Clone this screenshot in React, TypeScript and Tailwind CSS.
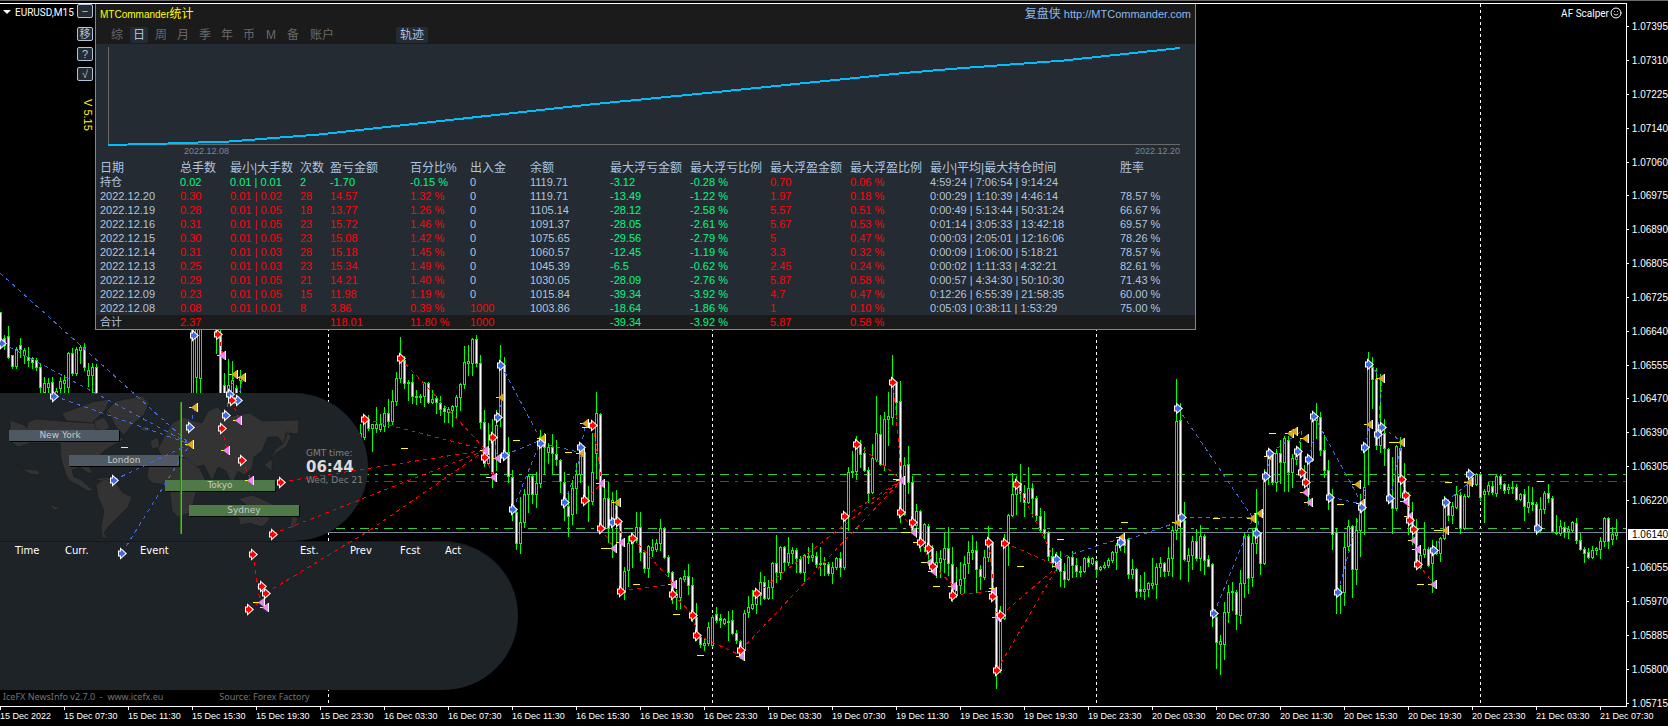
import { Smile } from "lucide-react";

// Bars are [high, bodyTop, bodyBottom, low, bear?], one every 4px from `x`
type Bar = number[];

const BAR_RUNS: { x: number; bars: Bar[] }[] = [
  {
    x: 0,
    bars: [
      [312, 312, 343, 344, 1], [335, 338, 345, 349, 1], [326, 336, 357, 358, 1], [355, 355, 366, 368, 1],
      [347, 349, 366, 368], [338, 345, 349, 357, 1], [348, 350, 355, 363], [347, 357, 360, 366, 1],
      [357, 358, 362, 368, 1], [358, 360, 367, 370, 1], [363, 367, 387, 393, 1], [377, 383, 392, 393],
      [378, 383, 387, 393], [377, 382, 393, 394, 1], [388, 391, 393, 394], [377, 381, 388, 393],
      [375, 380, 383, 392], [352, 353, 387, 393], [348, 353, 373, 375, 1], [347, 349, 373, 375],
      [345, 347, 350, 363], [343, 347, 367, 370, 1], [363, 370, 375, 386], [363, 367, 375, 393],
      [364, 367, 393, 394, 1],
    ],
  },
  { x: 192, bars: [[328, 329, 394, 396], [328, 329, 377, 394], [328, 329, 378, 393]] },
  {
    x: 216,
    bars: [
      [328, 329, 331, 353], [328, 336, 393, 394, 1], [373, 385, 394, 395, 1], [359, 385, 394, 395],
      [361, 380, 394, 395], [385, 388, 394, 395, 1], [370, 376, 380, 393],
    ],
  },
  {
    x: 360,
    bars: [
      [424, 433, 437, 437], [415, 420, 437, 439], [415, 420, 428, 430, 1], [424, 424, 428, 451],
      [407, 424, 428, 432], [414, 424, 429, 431], [407, 413, 426, 431], [399, 413, 421, 427, 1],
      [390, 401, 421, 424], [372, 378, 401, 405], [337, 360, 378, 382], [356, 360, 383, 388, 1],
      [380, 382, 383, 400], [374, 382, 396, 403, 1], [390, 396, 397, 404], [394, 396, 397, 402],
      [382, 383, 396, 406], [382, 383, 402, 403, 1], [390, 399, 402, 403], [396, 398, 402, 413, 1],
      [396, 403, 409, 415, 1], [405, 408, 411, 422, 1], [407, 409, 412, 422], [405, 406, 410, 426],
      [395, 397, 406, 418], [383, 384, 397, 410], [346, 362, 384, 388], [345, 361, 363, 375],
      [338, 339, 363, 375], [335, 339, 363, 366, 1], [355, 363, 422, 428, 1], [410, 422, 463, 466, 1],
      [423, 448, 463, 465], [419, 440, 473, 487, 1], [410, 425, 458, 470], [345, 367, 417, 426],
      [357, 366, 455, 457, 1], [437, 452, 476, 482, 1], [470, 477, 508, 520, 1], [510, 512, 543, 549, 1],
      [497, 522, 543, 553], [489, 494, 522, 527], [474, 476, 494, 512], [474, 476, 494, 503, 1],
      [472, 483, 494, 507], [430, 443, 483, 487], [433, 443, 447, 473, 1], [443, 447, 452, 463],
      [434, 447, 453, 473, 1], [440, 454, 459, 465, 1], [459, 460, 481, 492, 1], [472, 482, 502, 520, 1],
      [493, 506, 516, 536, 1], [480, 488, 514, 524], [463, 474, 488, 513], [452, 453, 474, 482],
      [448, 452, 500, 502, 1], [486, 500, 501, 521], [433, 472, 501, 504], [392, 413, 453, 478],
      [413, 414, 527, 533, 1], [479, 498, 527, 529], [482, 498, 528, 542, 1], [492, 500, 523, 557],
      [490, 505, 521, 547, 1], [521, 522, 592, 595, 1], [567, 571, 592, 599], [536, 543, 570, 586],
      [532, 535, 543, 567], [512, 527, 540, 542], [512, 527, 552, 560, 1], [550, 552, 568, 572, 1],
      [545, 546, 568, 577], [539, 547, 550, 556], [539, 543, 549, 551], [519, 528, 543, 550],
      [527, 528, 557, 558, 1], [555, 557, 572, 576, 1], [571, 572, 593, 603, 1], [590, 594, 597, 609],
      [577, 578, 597, 608], [570, 576, 579, 581], [564, 576, 585, 594, 1], [577, 585, 613, 621, 1],
      [603, 617, 638, 640, 1], [635, 637, 644, 647, 1], [638, 643, 645, 650], [622, 627, 643, 645],
      [615, 617, 645, 646], [607, 614, 620, 622, 1], [614, 618, 620, 627, 1], [618, 619, 623, 624],
      [611, 621, 622, 640], [610, 620, 633, 634, 1], [630, 633, 640, 643, 1], [640, 641, 650, 658, 1],
      [610, 613, 650, 660], [596, 607, 612, 617], [590, 604, 608, 609], [590, 595, 604, 613],
      [572, 582, 595, 604], [576, 582, 598, 599, 1], [580, 587, 598, 599], [562, 563, 587, 598],
      [535, 563, 572, 582, 1], [546, 547, 572, 579], [546, 547, 562, 570, 1], [537, 553, 562, 565],
      [547, 550, 553, 563], [548, 550, 558, 572, 1], [556, 559, 572, 573, 1], [554, 555, 572, 581],
      [547, 556, 557, 563], [543, 555, 557, 561], [552, 556, 564, 567, 1], [547, 563, 564, 575],
      [557, 563, 564, 575], [562, 564, 573, 575, 1], [562, 567, 573, 583], [557, 558, 567, 569],
      [552, 558, 567, 576, 1], [518, 520, 567, 569], [467, 472, 515, 530], [451, 471, 472, 477],
      [436, 447, 471, 479], [440, 445, 454, 467, 1], [447, 453, 470, 471, 1], [467, 470, 493, 502, 1],
      [444, 458, 492, 493], [396, 433, 459, 461], [415, 434, 464, 465, 1], [412, 419, 465, 470],
      [392, 416, 419, 445], [355, 385, 417, 424], [382, 383, 402, 418, 1], [381, 401, 515, 522, 1],
      [457, 465, 514, 515], [446, 464, 482, 493, 1], [476, 482, 530, 532, 1], [504, 511, 525, 537],
      [510, 511, 542, 551, 1], [523, 524, 547, 551], [524, 526, 545, 565, 1], [545, 548, 568, 569, 1],
      [551, 562, 567, 577], [550, 558, 562, 577], [532, 548, 559, 572], [527, 548, 563, 575, 1],
      [547, 564, 597, 601, 1], [567, 585, 595, 597], [562, 579, 585, 593], [556, 564, 578, 592],
      [541, 552, 563, 573], [535, 550, 552, 559], [541, 550, 569, 592, 1], [565, 569, 576, 589, 1],
      [550, 557, 577, 579], [526, 543, 557, 561], [542, 543, 595, 597, 1], [596, 597, 670, 688, 1],
      [606, 613, 670, 672], [534, 543, 618, 619], [514, 515, 543, 565], [473, 494, 515, 516],
      [476, 487, 494, 514], [464, 483, 493, 501, 1], [485, 493, 502, 516, 1], [467, 488, 502, 503],
      [483, 488, 498, 516, 1], [496, 498, 515, 520, 1], [508, 516, 530, 532, 1], [511, 529, 533, 538, 1],
      [531, 532, 556, 560, 1], [548, 556, 563, 567, 1], [552, 560, 565, 570], [551, 560, 571, 586, 1],
      [563, 571, 579, 587, 1], [556, 557, 579, 580], [551, 557, 565, 577, 1], [558, 565, 571, 576, 1],
      [566, 571, 572, 576], [557, 558, 571, 572], [556, 558, 562, 566, 1], [557, 558, 563, 564],
      [560, 561, 569, 577, 1], [566, 567, 569, 570], [562, 565, 567, 568], [558, 560, 565, 567],
      [551, 552, 560, 562], [543, 545, 552, 569], [537, 540, 545, 550], [538, 539, 545, 552, 1],
      [538, 539, 574, 578, 1], [559, 569, 574, 578], [568, 569, 591, 597, 1], [575, 589, 591, 596, 1],
      [572, 589, 591, 599], [582, 583, 589, 596], [558, 583, 585, 588], [563, 567, 584, 598],
      [557, 563, 567, 576], [562, 563, 571, 576, 1], [547, 558, 571, 575], [526, 530, 558, 576],
      [379, 421, 530, 539], [403, 420, 518, 579, 1], [502, 520, 559, 560, 1], [548, 555, 561, 581],
      [536, 541, 555, 569], [529, 541, 558, 560, 1], [525, 536, 558, 570], [534, 536, 560, 574, 1],
      [555, 559, 566, 566, 1], [563, 564, 615, 626, 1], [612, 617, 642, 668, 1], [635, 641, 644, 674],
      [602, 612, 644, 659], [585, 592, 612, 622], [582, 591, 592, 610], [590, 592, 614, 629, 1],
      [570, 583, 615, 623], [533, 536, 583, 597], [534, 536, 578, 593, 1], [529, 543, 577, 586],
      [489, 528, 543, 553], [532, 533, 563, 574, 1], [469, 477, 563, 564], [452, 454, 477, 484],
      [451, 453, 482, 484, 1], [449, 453, 482, 491], [440, 453, 462, 483, 1], [436, 438, 462, 491],
      [436, 440, 472, 491, 1], [454, 458, 472, 487], [448, 453, 459, 464], [442, 450, 470, 472, 1],
      [465, 472, 480, 483, 1], [455, 460, 494, 505], [418, 420, 460, 461], [403, 416, 420, 438],
      [412, 417, 450, 455, 1], [435, 450, 470, 477, 1], [460, 470, 497, 509, 1], [489, 497, 534, 549, 1],
      [528, 532, 592, 613, 1], [585, 592, 594, 613], [533, 547, 592, 605], [520, 526, 546, 550],
      [525, 526, 569, 597, 1], [518, 530, 569, 584], [494, 509, 530, 556], [446, 487, 509, 534],
      [352, 368, 447, 484], [357, 367, 379, 408, 1], [368, 379, 445, 449, 1], [374, 427, 445, 452],
      [419, 433, 448, 465, 1], [448, 449, 497, 502, 1], [457, 500, 508, 533, 1], [445, 446, 508, 510],
      [437, 448, 478, 497, 1], [463, 478, 493, 500, 1], [492, 497, 518, 534, 1], [502, 518, 532, 544, 1],
      [519, 530, 563, 567, 1], [553, 555, 567, 568], [522, 549, 554, 557], [547, 549, 565, 566, 1],
      [540, 553, 563, 592], [541, 549, 553, 554], [537, 538, 553, 561], [496, 505, 538, 539],
      [502, 503, 515, 520, 1], [502, 506, 515, 523], [486, 494, 507, 508], [492, 495, 528, 533, 1],
      [494, 496, 528, 529], [482, 483, 496, 497], [473, 477, 484, 485], [473, 474, 484, 485],
      [473, 474, 497, 500, 1], [489, 491, 494, 522], [482, 485, 491, 494], [481, 486, 492, 494, 1],
      [475, 476, 493, 496], [474, 476, 484, 488, 1], [483, 484, 490, 493, 1], [484, 487, 489, 493],
      [481, 487, 488, 493], [484, 487, 499, 500, 1], [493, 494, 499, 500], [489, 494, 506, 520, 1],
      [486, 502, 507, 512], [487, 502, 504, 510, 1], [502, 504, 530, 534, 1], [497, 509, 530, 532],
      [491, 493, 509, 513], [484, 493, 498, 502, 1], [496, 498, 531, 532, 1], [515, 532, 533, 534],
      [520, 526, 533, 535], [522, 527, 532, 537, 1], [526, 529, 531, 538], [521, 522, 530, 531],
      [518, 523, 540, 543, 1], [533, 540, 549, 550, 1], [547, 549, 553, 562, 1], [548, 552, 557, 558, 1],
      [546, 550, 557, 558], [547, 548, 550, 554], [537, 541, 549, 558], [517, 518, 541, 546],
      [517, 518, 541, 548, 1], [527, 534, 539, 544], [519, 532, 535, 539],
    ],
  },
];

const BUY_LINES = [
  [0, 273, 190, 444], [2, 343, 190, 444], [54, 396, 190, 444], [114, 480, 190, 444], [122, 553, 190, 444],
  [190, 427, 195, 407], [229, 394, 235, 374], [238, 400, 243, 377], [226, 415, 229, 394],
  [498, 417, 502, 397], [501, 365, 541, 440], [505, 455, 541, 440], [513, 509, 541, 440],
  [541, 443, 582, 453], [565, 502, 582, 453], [581, 447, 586, 423], [613, 522, 618, 502],
  [1057, 559, 1122, 538], [1121, 542, 1178, 522], [1178, 408, 1253, 518], [1182, 517, 1253, 518],
  [1214, 613, 1253, 518], [1257, 533, 1260, 513], [1266, 476, 1270, 456], [1270, 453, 1302, 431],
  [1298, 451, 1302, 431], [1309, 459, 1314, 438], [1314, 416, 1362, 504], [1330, 497, 1362, 504],
  [1338, 592, 1362, 504], [1362, 507, 1366, 484], [1365, 447, 1370, 424], [1369, 364, 1382, 378],
  [1378, 434, 1382, 378], [1382, 427, 1402, 442], [1390, 498, 1402, 442], [1434, 550, 1446, 530],
  [1446, 502, 1470, 482],
];

const SELL_LINES = [
  [218, 334, 223, 355], [232, 400, 239, 420], [222, 428, 227, 450], [242, 460, 251, 480],
  [281, 482, 486, 450], [365, 419, 486, 450], [400, 358, 486, 450], [273, 534, 486, 450],
  [266, 593, 370, 530], [370, 530, 486, 450], [253, 554, 260, 602], [249, 609, 260, 602],
  [485, 457, 494, 477], [493, 437, 498, 458], [585, 500, 602, 483], [593, 425, 602, 483],
  [601, 528, 614, 548], [618, 521, 622, 542], [633, 538, 674, 584], [621, 591, 674, 584],
  [673, 594, 693, 615], [693, 615, 697, 635], [697, 635, 742, 656], [741, 650, 902, 480],
  [757, 593, 902, 480], [845, 516, 902, 480], [857, 444, 902, 480], [893, 382, 902, 480],
  [901, 512, 914, 532], [913, 522, 930, 562], [929, 548, 934, 571], [933, 566, 954, 586],
  [953, 595, 994, 591], [989, 542, 994, 591], [993, 596, 998, 617], [1017, 484, 1058, 566],
  [1005, 543, 1058, 566], [1001, 615, 1058, 566], [997, 670, 1058, 566], [1302, 472, 1306, 492],
  [1306, 482, 1310, 502], [1402, 479, 1406, 501], [1406, 495, 1410, 516], [1410, 520, 1414, 540],
  [1414, 529, 1418, 549], [1418, 564, 1434, 584],
];

const BUYS = [
  [2, 343], [54, 396], [114, 480], [194, 335], [190, 427], [230, 394], [238, 400], [226, 415], [122, 553],
  [498, 417], [501, 365], [505, 455], [541, 443], [565, 502], [581, 447], [513, 509], [613, 522],
  [1057, 559], [1121, 542], [1178, 408], [1182, 517], [1214, 613], [1257, 533], [1266, 476], [1270, 453],
  [1298, 451], [1309, 459], [1314, 416], [1330, 497], [1338, 592], [1362, 507], [1365, 447], [1369, 364],
  [1378, 434], [1382, 427], [1390, 498], [1434, 550], [1446, 502], [1470, 474], [1538, 528],
];

const SELLS = [
  [218, 334], [232, 400], [222, 428], [242, 460], [281, 482], [273, 534], [253, 554], [262, 586],
  [266, 593], [249, 609], [365, 419], [401, 358], [493, 437], [485, 457], [585, 500], [593, 425],
  [601, 528], [618, 521], [633, 538], [621, 591], [673, 594], [693, 615], [697, 635], [741, 650],
  [757, 593], [845, 516], [857, 444], [893, 382], [901, 512], [913, 522], [921, 542], [929, 548],
  [933, 566], [953, 595], [989, 542], [993, 596], [1001, 615], [997, 670], [1005, 543], [1017, 484],
  [1302, 472], [1306, 482], [1402, 479], [1406, 495], [1410, 520], [1414, 529], [1418, 564],
];

const BUY_EXITS = [
  [235, 374], [243, 377], [195, 407], [191, 444], [502, 397], [543, 438], [586, 423], [582, 453],
  [618, 502], [1122, 537], [1178, 522], [1253, 518], [1260, 513], [1270, 456], [1291, 433], [1295, 431],
  [1306, 438], [1358, 484], [1370, 424], [1382, 378], [1402, 442], [1446, 530], [1470, 482], [1362, 503],
];

const SELL_EXITS = [
  [223, 355], [239, 420], [227, 450], [251, 480], [262, 602], [266, 607], [486, 450], [498, 458],
  [494, 477], [602, 483], [622, 542], [614, 548], [674, 584], [742, 656], [902, 480], [914, 532],
  [930, 562], [934, 571], [954, 586], [994, 591], [998, 617], [1058, 566], [1306, 492], [1310, 502],
  [1406, 501], [1410, 516], [1414, 540], [1418, 549], [1434, 584],
];

const PROFIT_DASHES = [
  [124, 447], [404, 448], [516, 440], [568, 452], [604, 548], [636, 584], [676, 614], [700, 655],
  [256, 602], [585, 427], [489, 477], [896, 479], [904, 532], [916, 542], [924, 562], [936, 586],
  [992, 588], [1020, 566], [1060, 539], [1124, 522], [1216, 518], [1272, 433], [1260, 513], [1340, 504],
  [1392, 442], [1437, 530], [1448, 482], [1540, 481], [1420, 584],
];

const DAY_SEPARATORS = [328, 712, 1096, 1480];

// outlines of the session map, in the map panel's own pixels
const CONTINENTS = [
  "M10 27 24 32 27 35 28 29 36 26 61 28 77 29 94 30 102 35 100 40 115 42 124 46 118 50 110 54 104 58 96 66 89 74 93 80 88 80 80 74 72 77 74 84 80 86 85 90 89 94 94 97 88 98 78 92 70 88 66 82 61 66 60 50 30 50 18 54 10 48Z",
  "M62 20 80 14 92 9 110 6 106 16 98 24 92 30 82 29 66 28Z",
  "M94 28 104 24 110 34 104 38 96 36Z",
  "M106 18 116 8 142 3 149 10 144 22 132 32 124 42 116 34 110 22Z",
  "M139 36 145 33 151 36 146 39Z",
  "M94 86 106 84 118 89 112 91Z",
  "M96 92 104 86 116 90 122 99 132 104 128 114 118 124 108 134 104 140 108 146 102 144 101 134 104 118 98 104Z",
  "M148 76 154 64 172 62 190 66 200 76 206 88 196 100 190 120 178 124 172 118 170 100 166 92 152 90 147 84Z",
  "M150 48 158 44 160 54 152 56Z",
  "M158 56 164 44 172 30 184 24 194 28 202 30 208 18 218 14 226 24 250 20 262 28 299 27 298 41 286 40 284 52 278 44 268 44 262 58 254 64 252 76 244 82 238 78 232 92 226 78 218 74 212 88 204 72 196 74 188 66 176 62 162 64Z",
  "M288 38 291 44 286 54 276 60 270 66 276 56 284 50Z",
  "M264 72 272 66 272 78Z",
  "M238 106 252 102 262 106 274 112 266 118 252 116Z",
  "M238 122 248 114 262 116 270 126 262 134 250 130 240 132Z",
  "M292 122 298 126 294 136 290 134Z",
  "M17 72 24 76 38 77 40 82 30 81Z",
  "M49 110 60 116 54 117Z",
];

const PRICES = [
  "1.07395", "1.07310", "1.07225", "1.07140", "1.07060", "1.06975", "1.06890", "1.06805", "1.06725",
  "1.06640", "1.06555", "1.06470", "1.06390", "1.06305", "1.06220", "1.06140", "1.06055", "1.05970",
  "1.05885", "1.05800", "1.05715",
];
const CURRENT_PRICE = "1.06140";

const TIMES = [
  "15 Dec 2022", "15 Dec 07:30", "15 Dec 11:30", "15 Dec 15:30", "15 Dec 19:30", "15 Dec 23:30",
  "16 Dec 03:30", "16 Dec 07:30", "16 Dec 11:30", "16 Dec 15:30", "16 Dec 19:30", "16 Dec 23:30",
  "19 Dec 03:30", "19 Dec 07:30", "19 Dec 11:30", "19 Dec 15:30", "19 Dec 19:30", "19 Dec 23:30",
  "20 Dec 03:30", "20 Dec 07:30", "20 Dec 11:30", "20 Dec 15:30", "20 Dec 19:30", "20 Dec 23:30",
  "21 Dec 03:30", "21 Dec 07:30",
];

const COLUMNS = [
  "日期", "总手数", "最小|大手数", "次数", "盈亏金额", "百分比%", "出入金", "余额", "最大浮亏金额",
  "最大浮亏比例", "最大浮盈金额", "最大浮盈比例", "最小|平均|最大持仓时间", "胜率",
];

const ROWS = [
  ["持仓", "0.02", "0.01 | 0.01", "2", "-1.70", "-0.15 %", "0", "1119.71", "-3.12", "-0.28 %", "0.70", "0.06 %", "4:59:24 | 7:06:54 | 9:14:24", ""],
  ["2022.12.20", "0.30", "0.01 | 0.02", "28", "14.57", "1.32 %", "0", "1119.71", "-13.49", "-1.22 %", "1.97", "0.18 %", "0:00:29 | 1:10:39 | 4:46:14", "78.57 %"],
  ["2022.12.19", "0.28", "0.01 | 0.05", "18", "13.77", "1.26 %", "0", "1105.14", "-28.12", "-2.58 %", "5.57", "0.51 %", "0:00:49 | 5:13:44 | 50:31:24", "66.67 %"],
  ["2022.12.16", "0.31", "0.01 | 0.05", "23", "15.72", "1.46 %", "0", "1091.37", "-28.05", "-2.61 %", "5.67", "0.53 %", "0:01:14 | 3:05:33 | 13:42:18", "69.57 %"],
  ["2022.12.15", "0.30", "0.01 | 0.05", "23", "15.08", "1.42 %", "0", "1075.65", "-29.56", "-2.79 %", "5", "0.47 %", "0:00:03 | 2:05:01 | 12:16:06", "78.26 %"],
  ["2022.12.14", "0.31", "0.01 | 0.03", "28", "15.18", "1.45 %", "0", "1060.57", "-12.45", "-1.19 %", "3.3", "0.32 %", "0:00:09 | 1:06:00 | 5:18:21", "78.57 %"],
  ["2022.12.13", "0.25", "0.01 | 0.03", "23", "15.34", "1.49 %", "0", "1045.39", "-6.5", "-0.62 %", "2.45", "0.24 %", "0:00:02 | 1:11:33 | 4:32:21", "82.61 %"],
  ["2022.12.12", "0.29", "0.01 | 0.05", "21", "14.21", "1.40 %", "0", "1030.05", "-28.09", "-2.76 %", "5.87", "0.58 %", "0:00:57 | 4:34:30 | 50:10:30", "71.43 %"],
  ["2022.12.09", "0.23", "0.01 | 0.05", "15", "11.98", "1.19 %", "0", "1015.84", "-39.34", "-3.92 %", "4.7", "0.47 %", "0:12:26 | 6:55:39 | 21:58:35", "60.00 %"],
  ["2022.12.08", "0.08", "0.01 | 0.01", "8", "3.86", "0.39 %", "1000", "1003.86", "-18.64", "-1.86 %", "1", "0.10 %", "0:05:03 | 0:38:11 | 1:53:29", "75.00 %"],
];
const TOTALS = ["合计", "2.37", "", "", "118.01", "11.80 %", "1000", "", "-39.34", "-3.92 %", "5.87", "0.58 %", "", ""];

const PERIOD_TABS = ["综", "日", "周", "月", "季", "年", "币", "M", "备"];

function cellColor(row: string[], col: number) {
  if (col === 0 || col === 7 || col >= 12) return "text-[#b0c4de]";
  if (col === 6) return row[6] === "0" ? "text-[#b0c4de]" : "text-[#ff0505]";
  if (col === 8 || col === 9) return "text-[#00fa80]";
  if (col < 6 && row[0] === "持仓") return "text-[#00fa80]";
  return "text-[#ff0505]";
}

function PriceChart() {
  return (
    <svg className="absolute inset-0 h-full w-full" shapeRendering="crispEdges" aria-hidden="true">
      <g transform="translate(0 -4)">
        {DAY_SEPARATORS.map((x) => (
          <line key={x} x1={x + 0.5} x2={x + 0.5} y1="4" y2="101%" stroke="#fff" strokeDasharray="3 3" />
        ))}
        <line x1="0" x2="100%" y1="474.5" y2="474.5" stroke="#32cd32" strokeDasharray="9 6 3 6" />
        <line x1="0" x2="100%" y1="481.5" y2="481.5" stroke="#ff0000" strokeDasharray="9 6 3 6" />
        <line x1="0" x2="100%" y1="528.5" y2="528.5" stroke="#32cd32" strokeDasharray="9 6 3 6" />
        <line x1="0" x2="100%" y1="532.5" y2="532.5" stroke="#778899" />
        {BAR_RUNS.map((run) =>
          run.bars.map(([high, top, bottom, low, bear], i) => {
            const x = run.x + i * 4;
            return (
              <g key={x}>
                <rect x={x} y={high} width="1" height={low - high + 1} fill="#00ff00" />
                <rect x={x - 1} y={top} width="3" height={bottom - top + 1} fill="#00ff00" />
                {bottom - top > 1 && (
                  <rect x={x} y={top + 1} width="1" height={bottom - top - 1} fill={bear ? "#fff" : "#000"} />
                )}
              </g>
            );
          })
        )}
      </g>
    </svg>
  );
}

function TradeMarks() {
  const arrow = (fill: string) => ([x, y]: number[]) => (
    <path
      key={`${x}-${y}`}
      transform={`translate(${x} ${y})`}
      d="M-3 -1.5H-1V-3.5L3.5 0.5L-1 4.5V2.5H-3Z"
      fill={fill}
      stroke="#fff"
      strokeWidth="2"
      paintOrder="stroke"
    />
  );
  const exit = (fill: string) => ([x, y]: number[]) => (
    <g key={`${x}-${y}`} transform={`translate(${x} ${y})`}>
      <path d="M-6 0.5H-3" stroke="#ffff00" />
      <path d="M2 -4V5L-4 0.5Z" fill={fill} />
      <path d="M2.5 -4V5" stroke="#fff" shapeRendering="crispEdges" />
    </g>
  );
  const dashed = (color: string) => ([x1, y1, x2, y2]: number[], i: number) => (
    <line key={i} x1={x1} y1={y1} x2={x2} y2={y2} stroke={color} strokeDasharray="4 4" shapeRendering="crispEdges" />
  );

  return (
    <svg className="pointer-events-none absolute inset-0 z-10 h-full w-full" aria-hidden="true">
      <g transform="translate(0 -4)">
        {BUY_LINES.map(dashed("#4169e1"))}
        {SELL_LINES.map(dashed("#ff0000"))}
        {PROFIT_DASHES.map(([x, y]) => (
          <rect key={`${x}-${y}`} x={x - 3} y={y} width="7" height="1" fill="#ffff00" />
        ))}
        {BUY_EXITS.map(exit("#daa520"))}
        {SELL_EXITS.map(exit("#ee82ee"))}
        {BUYS.map(arrow("#4169e1"))}
        {SELLS.map(arrow("#ff0000"))}
      </g>
    </svg>
  );
}

function ToolButton({ label, children }: { label: string; children: React.ReactNode }) {
  return (
    <button
      aria-label={label}
      className="flex h-[14px] w-[16px] items-center justify-center rounded-[2px] border border-[#b0c4de] bg-[#242b32] text-[11px] leading-none text-[#b0c4de]"
    >
      {children}
    </button>
  );
}

function StatsPanel() {
  return (
    <section className="relative z-20 max-w-[1101px] flex-1 overflow-hidden border-x border-b border-[#778899] bg-[#242b32]">
      <header className="h-10 bg-[#1b1b1b]">
        <div className="flex h-5 items-center justify-between pr-1 pl-1">
          <h1 className="text-[10px] text-[#ffff00]">
            MTCommander<span className="text-[12px]">统计</span>
          </h1>
          <a href="http://MTCommander.com" className="text-[11px] text-[#87b9f0]">
            <span className="text-[12px]">复盘侠</span> http://MTCommander.com
          </a>
        </div>
        <nav className="flex h-5 items-end pb-px pl-2.5 text-[12px] text-[#696969]">
          {PERIOD_TABS.map((tab) => (
            <button
              key={tab}
              className={
                tab === "日"
                  ? "mx-0.5 h-4 w-[18px] rounded-[2px] bg-[#242b32] leading-4 text-[#b0c4de]"
                  : "mx-0.5 h-4 w-[18px] leading-4"
              }
            >
              {tab}
            </button>
          ))}
          <button className="h-4 w-9 leading-4">账户</button>
          <button className="ml-14 h-4 w-8 rounded-[2px] bg-[#242b32] leading-4 text-[#b0c4de]">轨迹</button>
        </nav>
      </header>

      <figure className="h-[116px] pt-[3px] pr-[15px] pl-3">
        <svg viewBox="0 0 1072 100" preserveAspectRatio="none" className="h-[100px] w-full" shapeRendering="crispEdges">
          <path d="M0.5 0V97.5H1072" fill="none" stroke="#696969" />
          <path
            d="M0 98L60 96.5L121 94.5L211 87.5L482 57.5L594 46.5L796 26L849 21.5L956 13.5L1072 1"
            fill="none"
            stroke="#00bfff"
            strokeWidth="2"
          />
        </svg>
        <figcaption className="flex h-2 items-center justify-between pl-[76px] text-[9px] leading-none text-[#778899]">
          <time>2022.12.08</time>
          <time>2022.12.20</time>
        </figcaption>
      </figure>

      <table className="w-full table-fixed border-collapse text-left text-[11px] leading-[14px] whitespace-nowrap">
        <colgroup>
          <col className="w-[84px]" />
          <col className="w-[50px]" />
          <col className="w-[70px]" />
          <col className="w-[30px]" />
          <col className="w-[80px]" />
          <col className="w-[60px]" />
          <col className="w-[60px]" />
          <col className="w-[80px]" />
          <col className="w-[80px]" />
          <col className="w-[80px]" />
          <col className="w-[80px]" />
          <col className="w-[80px]" />
          <col className="w-[190px]" />
          <col />
        </colgroup>
        <thead>
          <tr className="h-[15px] text-[12px] text-[#b0c4de]">
            {COLUMNS.map((name) => (
              <th key={name} className="p-0 align-bottom font-normal first:pl-1">{name}</th>
            ))}
          </tr>
        </thead>
        <tbody>
          {ROWS.map((row) => (
            <tr key={row[0]} className="h-[14px]">
              {row.map((cell, i) => (
                <td key={i} className={`p-0 first:pl-1 ${cellColor(row, i)}`}>{cell}</td>
              ))}
            </tr>
          ))}
        </tbody>
        <tfoot>
          <tr className="h-[14px] bg-[#1b1b1b]">
            {TOTALS.map((cell, i) => (
              <td key={i} className={`p-0 first:pl-1 ${cellColor(TOTALS, i)}`}>{cell}</td>
            ))}
          </tr>
        </tfoot>
      </table>
    </section>
  );
}

function Session({ name, className }: { name: string; className: string }) {
  return (
    <li
      className={`flex h-[11px] w-[110px] items-center justify-center text-[9px] leading-none text-[#c8c8c8] shadow-[1px_1px_0_#000] ${className}`}
    >
      {name}
    </li>
  );
}

function NewsInfo() {
  return (
    <section className="relative mt-auto font-['DejaVu_Sans',sans-serif]">
      <div className="relative flex h-[148px] w-[368px] items-center rounded-r-full bg-[#1e2327]">
        <svg className="absolute inset-0 h-full w-full" aria-hidden="true">
          {CONTINENTS.map((d) => (
            <path key={d} d={d} fill="#333333" stroke="#16191c" strokeWidth="0.5" />
          ))}
        </svg>
        <ul className="relative flex w-[306px] flex-col gap-[14px] pt-3">
          <Session name="New York" className="ml-[9px] bg-[#4e5963] pr-2" />
          <Session name="London" className="ml-[69px] bg-[#4e5963]" />
          <Session name="Tokyo" className="ml-[165px] bg-[#4e7a47]" />
          <Session name="Sydney" className="ml-[189px] bg-[#4e7a47]" />
        </ul>
        <div className="absolute top-[9px] left-[180px] h-[132px] w-[2px] border-r border-[#e0762a] bg-[#2e7a14]" />
        <div className="relative flex flex-1 flex-col text-[9px] leading-[13px] whitespace-nowrap text-[#808080]">
          <span>GMT time:</span>
          <strong className="text-[15px] leading-[14px] text-[#dcdcdc]">06:44</strong>
          <span>Wed, Dec 21</span>
        </div>
      </div>
      <div className="h-[149px] w-[518px] rounded-r-full border-t border-[#14181b] bg-[#1e2327]">
        <div className="grid grid-cols-[50px_75px_160px_50px_50px_45px_1fr] pt-[3px] pl-[15px] text-[10px] leading-[12px] text-white">
          <span>Time</span>
          <span>Curr.</span>
          <span>Event</span>
          <span>Est.</span>
          <span>Prev</span>
          <span>Fcst</span>
          <span>Act</span>
        </div>
      </div>
      <footer className="flex h-4 gap-14 pl-[3px] font-['Noto_Sans',sans-serif] text-[9px] leading-[14px] whitespace-pre text-[#737373]">
        <span>IceFX NewsInfo v2.7.0  -  www.icefx.eu</span>
        <span>Source: Forex Factory</span>
      </footer>
    </section>
  );
}

export default function App() {
  return (
    <div className="flex min-h-screen flex-col overflow-hidden bg-black font-['Liberation_Sans','Noto_Sans_CJK_SC',sans-serif] text-white">
      <div className="h-[3px] border-t border-[#696969]" />
      <div className="flex flex-1">
        <div className="flex min-w-0 flex-1 flex-col">
          <main className="relative flex flex-1 flex-col border-y border-r border-white">
            <PriceChart />
            <div className="relative flex items-start">
              <aside className="flex w-[95px] items-start justify-between pr-0.5 pl-[3px]">
                <div className="flex h-4 items-center gap-1 font-['Roboto',sans-serif] text-[10px]">
                  <span className="border-x-[4px] border-t-[4px] border-x-transparent border-t-white" />
                  <span>EURUSD,M15</span>
                </div>
                <div className="flex flex-col items-end gap-[6px]">
                  <div className="mb-[3px]">
                    <ToolButton label="最小化">−</ToolButton>
                  </div>
                  <ToolButton label="移动">移</ToolButton>
                  <ToolButton label="帮助">?</ToolButton>
                  <ToolButton label="确认">√</ToolButton>
                  <span className="mt-3 text-[11px] leading-[11px] text-[#ffff00] [writing-mode:vertical-rl]">V 5.15</span>
                </div>
              </aside>
              <StatsPanel />
              <div className="ml-auto flex h-[18px] items-center gap-px pr-1 font-['Roboto',sans-serif] text-[10px]">
                <span>AF Scalper</span>
                <Smile size={12} strokeWidth={2} />
              </div>
            </div>
            <NewsInfo />
            <TradeMarks />
          </main>
          <ol className="flex h-[19px] text-[9px] whitespace-nowrap">
            {TIMES.map((time) => (
              <li key={time} className="w-16 shrink-0">
                <span className="block h-[3px] w-px bg-white" />
                <span className="block leading-[12px]">{time}</span>
              </li>
            ))}
          </ol>
        </div>
        <ol className="flex w-[41px] flex-col pt-[7px] pb-1.5 text-[10px]">
          {PRICES.map((price) => (
            <li key={price} className="flex flex-1 items-center gap-[3px]">
              {price === CURRENT_PRICE ? (
                <span className="ml-px w-10 bg-white pl-1 leading-[11px] text-black">{price}</span>
              ) : (
                <>
                  <span className="h-px w-[3px] bg-white" />
                  {price}
                </>
              )}
            </li>
          ))}
        </ol>
      </div>
    </div>
  );
}
